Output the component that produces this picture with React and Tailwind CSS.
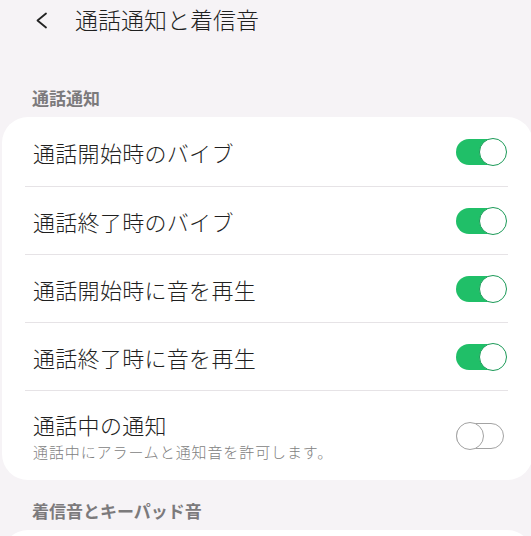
import React from "react";

const font = { fontFamily: '"Noto Sans CJK JP", "Noto Sans", sans-serif' };

function Toggle({ on }) {
  if (on) {
    return (
      <div className="relative w-[50px] h-[26px] rounded-full bg-[#20bf68]">
        <div className="absolute right-[-1px] top-[-1px] w-[28px] h-[28px] rounded-full bg-white border-[1.5px] border-[#1c9a58]" />
      </div>
    );
  }
  return (
    <div className="relative w-[48px] h-[26px] mr-[2px] rounded-full border-[1.5px] border-[#a3a3a3] bg-white">
      <div className="absolute left-[-1.5px] top-[-2px] w-[28px] h-[28px] rounded-full bg-white border-[1.5px] border-[#a3a3a3]" />
    </div>
  );
}

function Row({ title, sub, on, h, divider = true }) {
  return (
    <div>
      <div className={`flex items-center justify-between pl-[31px] pr-[27px] ${h}`}>
        <div className="flex flex-col">
          <span className="text-[22px] leading-[30px] font-light tracking-[0.3px] text-[#1f1f1f]">{title}</span>
          {sub && <span className="text-[15px] leading-[20px] font-light tracking-[0.9px] text-[#7e7e7e] mt-[3px]">{sub}</span>}
        </div>
        <Toggle on={on} />
      </div>
      {divider && <div className="ml-[23px] mr-[25px] h-px bg-[#e6e3e6]" />}
    </div>
  );
}

export default function App() {
  return (
    <div className="w-[531px] h-[536px] bg-[#f6f3f6] overflow-hidden" style={font}>
      <div className="h-[38px] flex items-center pl-[35px]">
        <svg width="13" height="17" viewBox="0 0 13 17" className="mt-[3px]">
          <path d="M11 1.5 L2.5 8.5 L11 15.5" fill="none" stroke="#222" strokeWidth="1.8" strokeLinecap="round" strokeLinejoin="round" />
        </svg>
        <span className="ml-[27px] text-[23px] leading-[30px] font-light text-[#1f1f1f]">通話通知と着信音</span>
      </div>
      <div className="mt-[48px] pl-[32px] text-[17px] leading-[23px] font-bold text-[#7c7a7c]">通話通知</div>
      <div className="mt-[8px] ml-[2px] w-[531px] bg-white rounded-[26px]">
        <Row title="通話開始時のバイブ" on h="h-[69px]" />
        <Row title="通話終了時のバイブ" on h="h-[67px]" />
        <Row title="通話開始時に音を再生" on h="h-[67px]" />
        <Row title="通話終了時に音を再生" on h="h-[67px]" />
        <Row title="通話中の通知" sub="通話中にアラームと通知音を許可します。" on={false} h="h-[89px]" divider={false} />
      </div>
      <div className="mt-[19px] pl-[32px] text-[17px] leading-[23px] font-bold text-[#7c7a7c]">着信音とキーパッド音</div>
      <div className="mt-[8px] ml-[2px] w-[531px] h-[60px] bg-white rounded-[26px]" />
    </div>
  );
}
